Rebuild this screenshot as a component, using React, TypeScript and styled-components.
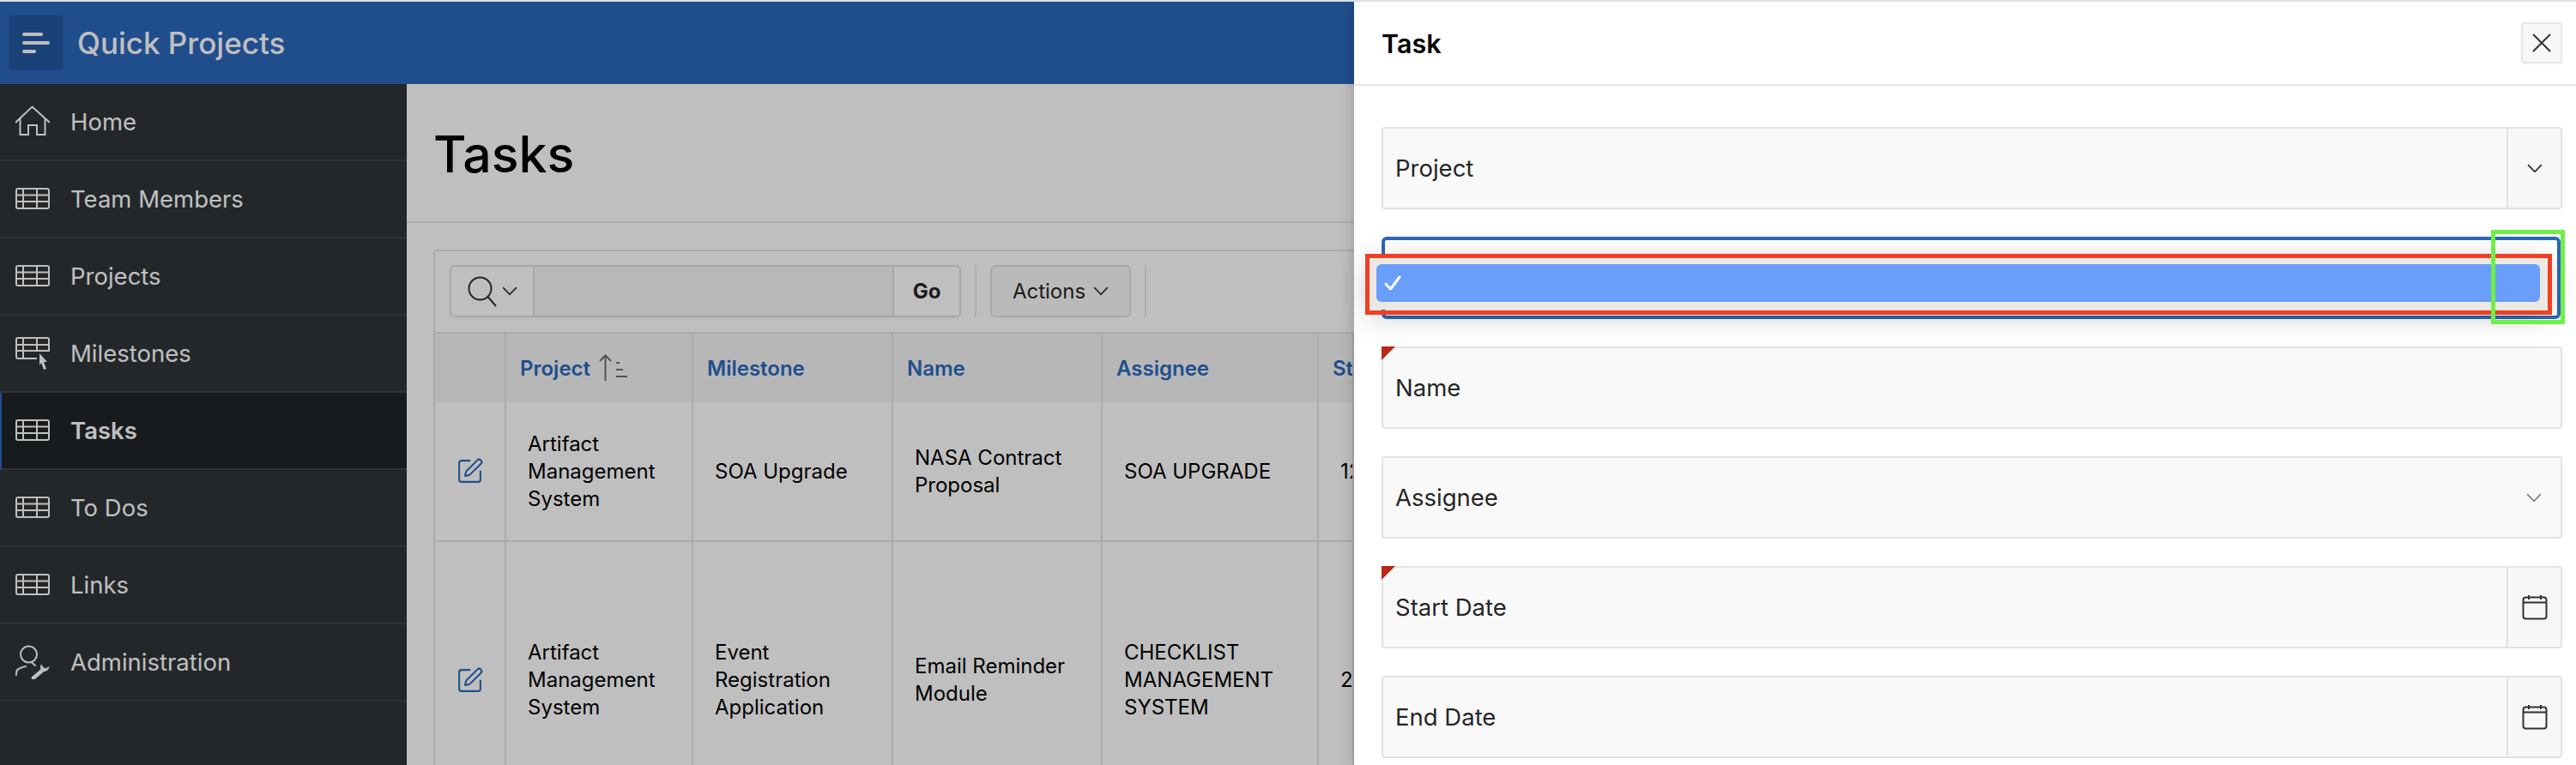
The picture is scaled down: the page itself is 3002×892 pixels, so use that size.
import React from "react";
import styled, { createGlobalStyle } from "styled-components";
import { SquarePen } from "lucide-react";

const GlobalStyle = createGlobalStyle`
  html, body {
    margin: 0;
    padding: 0;
    background: #fff;
    font-family: Inter, "Liberation Sans", sans-serif;
  }
  * {
    box-sizing: border-box;
  }
`;

const Page = styled.div`
  width: 3002px;
  height: 892px;
  display: flex;
  flex-direction: column;
  overflow: hidden;
`;

const TopStrip = styled.div`
  height: 2px;
  flex: none;
  background: #e0e0e0;
`;

const Stage = styled.div`
  position: relative;
  flex: 1;
  min-height: 0;
  display: flex;
  flex-direction: column;
  overflow: hidden;
`;

const HeaderBar = styled.header`
  height: 96px;
  flex: none;
  display: flex;
  align-items: center;
  gap: 16px;
  padding-left: 10px;
  background: #2b68bd;
`;

const MenuButton = styled.button`
  width: 64px;
  height: 64px;
  display: flex;
  align-items: center;
  justify-content: center;
  padding: 0;
  border: 0;
  border-radius: 4px;
  background: #2559a1;
`;

const AppTitle = styled.div`
  color: #fff;
  font-size: 35px;
  font-weight: 500;
`;

const Body = styled.div`
  flex: 1;
  min-height: 0;
  display: flex;
`;

const Nav = styled.nav`
  width: 474px;
  flex: none;
  background: #303539;
`;

const NavItem = styled.div<{ $active?: boolean }>`
  height: 90px;
  display: flex;
  align-items: center;
  gap: 24px;
  padding-left: ${(p) => (p.$active ? "16px" : "18px")};
  color: #fff;
  font-size: 27.5px;
  font-weight: ${(p) => (p.$active ? 600 : 400)};
  background: ${(p) => (p.$active ? "#212428" : "transparent")};
  border-left: ${(p) => (p.$active ? "2px solid #2b68bd" : "0")};
  border-bottom: 2px solid #3f4448;
`;

const NavIcon = styled.svg`
  width: 40px;
  height: 40px;
  flex: none;
  fill: none;
  stroke: #fff;
  stroke-width: 2;
`;

const Main = styled.main`
  flex: 1;
  min-width: 0;
  overflow: hidden;
`;

const TitleBar = styled.div`
  height: 162px;
  display: flex;
  align-items: center;
  padding: 3px 0 0 31px;
  border-bottom: 2px solid #e4e4e4;
`;

const PageTitle = styled.h1`
  margin: 0;
  color: #000;
  font-size: 59px;
  font-weight: 500;
`;

const Region = styled.section`
  margin: 31px 0 0 31px;
  width: 1200px;
  border: 2px solid #e4e4e4;
  border-right: 0;
  border-radius: 4px 0 0 0;
`;

const Toolbar = styled.div`
  display: flex;
  align-items: stretch;
  gap: 16px;
  height: 96px;
  padding: 16px 17px 17px;
  border-bottom: 2px solid #e4e4e4;
`;

const SearchGroup = styled.div`
  display: flex;
  border: 2px solid #e0e0e0;
  border-radius: 6px;
  box-shadow: 0 2px 4px rgba(0, 0, 0, 0.04);
`;

const SearchSelect = styled.div`
  width: 97px;
  display: flex;
  align-items: center;
  justify-content: center;
  gap: 6px;
  border-right: 2px solid #e0e0e0;
`;

const SearchField = styled.div`
  width: 417px;
  background: #f6f6f6;
`;

const GoButton = styled.div`
  width: 78px;
  display: flex;
  align-items: center;
  justify-content: center;
  border-left: 2px solid #e0e0e0;
  color: #262626;
  font-size: 24px;
  font-weight: 700;
`;

const ToolbarSep = styled.div`
  width: 2px;
  background: #e8e8e8;
`;

const ActionsButton = styled.div`
  width: 164px;
  display: flex;
  align-items: center;
  justify-content: center;
  gap: 9px;
  border: 2px solid #e0e0e0;
  border-radius: 6px;
  background: #f8f8f8;
  color: #262626;
  font-size: 24px;
`;

const Grid = styled.table`
  border-collapse: collapse;
  table-layout: fixed;
  width: 1070px;
`;

const HeadCell = styled.th`
  height: 80px;
  padding: 0 0 0 16px;
  overflow: hidden;
  text-align: left;
  vertical-align: middle;
  background: #f5f5f5;
  color: #2b68bd;
  font-size: 24px;
  font-weight: 600;
  white-space: nowrap;
  border-right: 2px solid #e4e4e4;
`;

const HeadInner = styled.span`
  display: inline-flex;
  align-items: center;
  gap: 10px;
`;

const Cell = styled.td<{ $tall?: boolean }>`
  height: ${(p) => (p.$tall ? "324px" : "162px")};
  padding: 0 16px 0 25px;
  vertical-align: middle;
  color: #000;
  font-size: 24px;
  line-height: 32px;
  border-right: 2px solid #e4e4e4;
  border-bottom: 2px solid #e4e4e4;
`;

const EditCell = styled(Cell)`
  padding: 0;
  text-align: center;
  color: #2b68bd;
`;

const ClippedCell = styled(Cell)`
  padding-right: 0;
  overflow: hidden;
  white-space: nowrap;
`;

const EditIcon = styled(SquarePen)`
  display: block;
  margin: 0 auto;
`;

const Scrim = styled.div`
  position: absolute;
  inset: 0;
  background: rgba(0, 0, 0, 0.25);
`;

const Drawer = styled.aside`
  position: absolute;
  top: 0;
  right: 0;
  bottom: 0;
  width: 1424px;
  background: #fff;
  box-shadow: 0 0 16px rgba(0, 0, 0, 0.22);
`;

const DrawerHeader = styled.div`
  height: 98px;
  display: flex;
  align-items: center;
  justify-content: space-between;
  padding: 0 16px 0 32px;
  border-bottom: 2px solid #e6e6e6;
`;

const DrawerTitle = styled.h2`
  margin: 0;
  color: #000;
  font-size: 30.5px;
  font-weight: 600;
`;

const CloseButton = styled.button`
  width: 48px;
  height: 48px;
  display: flex;
  align-items: center;
  justify-content: center;
  padding: 0;
  background: #f7f7f7;
  border: 2px solid #e6e6e6;
  border-radius: 4px;
  box-shadow: 0 1px 2px rgba(0, 0, 0, 0.05);
`;

const DrawerBody = styled.div`
  display: flex;
  flex-direction: column;
  gap: 32px;
  padding: 48px 16px 0 32px;
`;

const Field = styled.div<{ $required?: boolean }>`
  position: relative;
  height: 96px;
  display: flex;
  background: #f9f9f9;
  border: 2px solid #e2e2e2;
  border-radius: 4px;

  &::before {
    content: "";
    display: ${(p) => (p.$required ? "block" : "none")};
    position: absolute;
    top: -2px;
    left: -2px;
    border-style: solid;
    border-width: 16px 16px 0 0;
    border-color: #b92716 transparent transparent transparent;
  }
`;

const FieldLabel = styled.div`
  flex: 1;
  display: flex;
  align-items: center;
  padding-left: 14px;
  color: #262626;
  font-size: 27.5px;
`;

const FieldButton = styled.div<{ $divided?: boolean; $shade?: boolean }>`
  width: 63px;
  flex: none;
  display: flex;
  align-items: center;
  justify-content: center;
  background: ${(p) => (p.$shade ? "#f7f7f7" : "transparent")};
  border-left: ${(p) => (p.$divided ? "2px solid #e2e2e2" : "0")};
`;

const FocusField = styled.div`
  position: relative;
  height: 96px;
  width: 1374px;
  background: #fff;
  border: 4px solid #2c66bb;
  border-radius: 6px;
`;

const Popup = styled.div`
  position: absolute;
  top: 21px;
  left: -18px;
  width: 1372px;
  height: 60px;
  padding: 7px 8px;
  background: #ece8e4;
  border-radius: 6px;
  box-shadow: 0 6px 36px rgba(0, 0, 0, 0.24);
`;

const PopupOption = styled.div`
  height: 44px;
  display: flex;
  align-items: center;
  padding-left: 9px;
  background: #699efa;
  border-radius: 6px;
`;

const Annotation = styled.div<{ $color: string }>`
  position: absolute;
  border: 5px solid ${(p) => p.$color};
  pointer-events: none;
`;

const RedBox = styled(Annotation)`
  top: 294px;
  left: 13px;
  width: 1383px;
  height: 71px;
`;

const GreenBox = styled(Annotation)`
  top: 266px;
  left: 1325px;
  width: 86px;
  height: 110px;
`;

const TableIcon = () => (
  <NavIcon viewBox="0 0 40 40">
    <rect x="1" y="8" width="38" height="23" rx="2" />
    <path d="M1 15.5H39M1 23H39M9 8V31M25 8V31" />
  </NavIcon>
);

const HomeIcon = () => (
  <NavIcon viewBox="0 0 40 40">
    <path d="M0.5 20.5 19.5 2.5 39.5 20.5" strokeLinecap="round" />
    <path d="M5.5 16V35H15V24H25V35H34.5V16" />
  </NavIcon>
);

const MilestoneIcon = () => (
  <NavIcon viewBox="0 0 40 40">
    <path d="M25 26H3a2 2 0 0 1-2-2V4a2 2 0 0 1 2-2h34a2 2 0 0 1 2 2v13H1M1 10H39M1 18.5V10M9 2V26M25 2V17" />
    <path d="M28 20 37 30H33L36 38 33 39 30 31 28 34Z" fill="#fff" stroke="none" />
  </NavIcon>
);

const AdminIcon = () => (
  <NavIcon viewBox="0 0 40 40">
    <circle cx="15.5" cy="11" r="9.5" />
    <path d="M1 35V33C1 28 5 27 12 25M19 20.5 23 24" strokeLinecap="round" />
    <path d="M21 38.5 31 30" strokeWidth="4.5" strokeLinecap="round" />
    <path d="M30 22.5C28 26 29 30 33 31 36 31 39 29 39.5 25L35 27.5 32.5 26Z" fill="#fff" stroke="none" />
  </NavIcon>
);

const Chevron = ({ size = 18, color = "#333" }: { size?: number; color?: string }) => (
  <svg width={size} height={size * 0.6} viewBox="0 0 18 11" fill="none" stroke={color} strokeWidth="1.8">
    <path d="M1 1.2 9 9.5 17 1.2" />
  </svg>
);

const CalendarIcon = () => (
  <svg width="30" height="30" viewBox="0 0 30 30" fill="none" stroke="#333" strokeWidth="2">
    <rect x="1.5" y="3.5" width="27" height="25" rx="3" />
    <path d="M1.5 9.5H28.5M8 1V6M22 1V6" />
  </svg>
);

const SearchIcon = () => (
  <svg width="34" height="36" viewBox="0 0 34 36" fill="none" stroke="#333" strokeWidth="2">
    <circle cx="14.5" cy="14.5" r="13" />
    <path d="M23.5 24 33 35" />
  </svg>
);

const SortIcon = () => (
  <svg width="34" height="32" viewBox="0 0 34 32" fill="none" stroke="#707070" strokeWidth="2">
    <path d="M7.5 31V2M1 8 7.5 1.5 14 8" />
    <path d="M20 10H24M20 18H28M20 26H33" />
  </svg>
);

const CloseIcon = () => (
  <svg width="22" height="22" viewBox="0 0 22 22" fill="none" stroke="#333" strokeWidth="2">
    <path d="M1 1 21 21M21 1 1 21" />
  </svg>
);

const MenuIcon = () => (
  <svg width="32" height="24" viewBox="0 0 32 24" fill="none" stroke="#fff" strokeWidth="4" strokeLinecap="round">
    <path d="M2 2H22M2 12H30M2 22H14" />
  </svg>
);

const CheckIcon = () => (
  <svg width="20" height="20" viewBox="0 0 20 20" fill="none" stroke="#fff" strokeWidth="3" strokeLinecap="round" strokeLinejoin="round">
    <path d="M2 11 7.5 17 18 3" />
  </svg>
);

const navItems = [
  { label: "Home", icon: <HomeIcon /> },
  { label: "Team Members", icon: <TableIcon /> },
  { label: "Projects", icon: <TableIcon /> },
  { label: "Milestones", icon: <MilestoneIcon /> },
  { label: "Tasks", icon: <TableIcon />, active: true },
  { label: "To Dos", icon: <TableIcon /> },
  { label: "Links", icon: <TableIcon /> },
  { label: "Administration", icon: <AdminIcon /> },
];

const rows = [
  {
    project: "Artifact Management System",
    milestone: "SOA Upgrade",
    name: "NASA Contract Proposal",
    assignee: "SOA UPGRADE",
    start: "12",
  },
  {
    project: "Artifact Management System",
    milestone: "Event Registration Application",
    name: "Email Reminder Module",
    assignee: "CHECKLIST MANAGEMENT SYSTEM",
    start: "2/",
    tall: true,
  },
];

const App: React.FC = () => {
  return (
    <Page>
      <GlobalStyle />
      <TopStrip />
      <Stage>
        <HeaderBar>
          <MenuButton>
            <MenuIcon />
          </MenuButton>
          <AppTitle>Quick Projects</AppTitle>
        </HeaderBar>
        <Body>
          <Nav>
            {navItems.map((item) => (
              <NavItem key={item.label} $active={item.active}>
                {item.icon}
                {item.label}
              </NavItem>
            ))}
          </Nav>
          <Main>
            <TitleBar>
              <PageTitle>Tasks</PageTitle>
            </TitleBar>
            <Region>
              <Toolbar>
                <SearchGroup>
                  <SearchSelect>
                    <SearchIcon />
                    <Chevron />
                  </SearchSelect>
                  <SearchField />
                  <GoButton>Go</GoButton>
                </SearchGroup>
                <ToolbarSep />
                <ActionsButton>
                  Actions
                  <Chevron />
                </ActionsButton>
                <ToolbarSep />
              </Toolbar>
              <Grid>
                <colgroup>
                  <col style={{ width: 82 }} />
                  <col style={{ width: 218 }} />
                  <col style={{ width: 233 }} />
                  <col style={{ width: 244 }} />
                  <col style={{ width: 252 }} />
                  <col style={{ width: 41 }} />
                </colgroup>
                <thead>
                  <tr>
                    <HeadCell />
                    <HeadCell>
                      <HeadInner>
                        Project
                        <SortIcon />
                      </HeadInner>
                    </HeadCell>
                    <HeadCell>Milestone</HeadCell>
                    <HeadCell>Name</HeadCell>
                    <HeadCell>Assignee</HeadCell>
                    <HeadCell>St</HeadCell>
                  </tr>
                </thead>
                <tbody>
                  {rows.map((row) => (
                    <tr key={row.name}>
                      <EditCell $tall={row.tall}>
                        <EditIcon size={33} strokeWidth={1.5} />
                      </EditCell>
                      <Cell $tall={row.tall}>{row.project}</Cell>
                      <Cell $tall={row.tall}>{row.milestone}</Cell>
                      <Cell $tall={row.tall}>{row.name}</Cell>
                      <Cell $tall={row.tall}>{row.assignee}</Cell>
                      <ClippedCell $tall={row.tall}>{row.start}</ClippedCell>
                    </tr>
                  ))}
                </tbody>
              </Grid>
            </Region>
          </Main>
        </Body>
        <Scrim />
        <Drawer>
          <DrawerHeader>
            <DrawerTitle>Task</DrawerTitle>
            <CloseButton>
              <CloseIcon />
            </CloseButton>
          </DrawerHeader>
          <DrawerBody>
            <Field>
              <FieldLabel>Project</FieldLabel>
              <FieldButton $divided $shade>
                <Chevron />
              </FieldButton>
            </Field>
            <FocusField>
              <Popup>
                <PopupOption>
                  <CheckIcon />
                </PopupOption>
              </Popup>
            </FocusField>
            <Field $required>
              <FieldLabel>Name</FieldLabel>
            </Field>
            <Field>
              <FieldLabel>Assignee</FieldLabel>
              <FieldButton>
                <Chevron color="#808080" />
              </FieldButton>
            </Field>
            <Field $required>
              <FieldLabel>Start Date</FieldLabel>
              <FieldButton $divided $shade>
                <CalendarIcon />
              </FieldButton>
            </Field>
            <Field>
              <FieldLabel>End Date</FieldLabel>
              <FieldButton $divided $shade>
                <CalendarIcon />
              </FieldButton>
            </Field>
          </DrawerBody>
          <RedBox $color="#ee4023" />
          <GreenBox $color="#6ff048" />
        </Drawer>
      </Stage>
    </Page>
  );
};

export default App;
